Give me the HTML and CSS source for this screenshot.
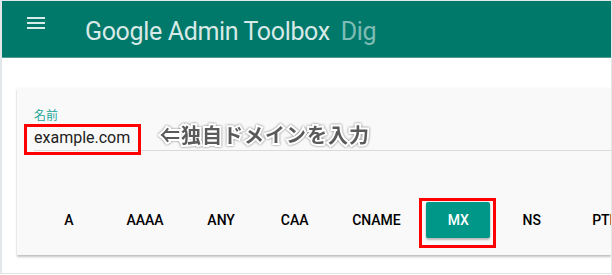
FILE: index.html
```html
<!DOCTYPE html>
<html lang="ja">
<head>
  <meta charset="UTF-8">
  <meta name="viewport" content="width=device-width, initial-scale=1.0">
  <title>Google Admin Toolbox Dig</title>
  <link rel="stylesheet" href="styles.css">
</head>
<body>
  <div class="page">
    <header class="topbar">
      <svg class="menu" width="24" height="24" viewBox="0 0 24 24">
        <path d="M3 18h18v-2H3v2zm0-5h18v-2H3v2zm0-7v2h18V6H3z" fill="currentColor"/>
      </svg>
      <h1 class="title">Google Admin Toolbox <span class="sub">Dig</span></h1>
    </header>

    <div class="card">
      <div class="field">
        <label class="label">名前</label>
        <div class="input">
          <span class="value">example.com</span>
          <span class="note">⇐独自ドメインを入力</span>
        </div>
      </div>

      <div class="types">
        <button class="type">A</button>
        <button class="type">AAAA</button>
        <button class="type">ANY</button>
        <button class="type">CAA</button>
        <button class="type">CNAME</button>
        <button class="type active">MX</button>
        <button class="type">NS</button>
        <button class="type">PTR</button>
      </div>
    </div>
  </div>
</body>
</html>
```

FILE: styles.css
```css
body { margin: 0; font-family: Roboto, "Noto Sans", sans-serif; background: #fff; overflow: hidden; }
.page { width: 612px; height: 274px; box-sizing: border-box; border: 1px solid #e3e7ea; border-left-width: 2px; overflow: hidden; }

.topbar { display: flex; align-items: flex-start; height: 56px; background: #00796b; border-bottom: 1px solid #4f9d92; color: rgba(255,255,255,.85); }
.menu { margin: 10px 0 0 22px; flex: none; }
.title { margin: 16px 0 0 37px; font-size: 25px; font-weight: 400; line-height: 30px; white-space: nowrap; letter-spacing: -0.35px; }
.sub { margin-left: 5px; color: rgba(255,255,255,.5); }

.card { margin: 30px 0 0 15px; padding: 20px 0 17px 17px; background: #f9f9f9; box-shadow: 0 2px 2px rgba(0,0,0,.24), 0 0 1px rgba(0,0,0,.08); }
.label { display: block; font-family: "Noto Sans CJK JP", sans-serif; font-size: 12px; line-height: 14px; color: #26a69a; }
.input { position: relative; margin-top: 6px; padding-bottom: 2px; border-bottom: 1px solid #dadada; }
.value { position: relative; display: inline-block; font-size: 16px; line-height: 20px; color: #222; }
.value::after { content: ""; position: absolute; top: -4px; left: -10px; right: -11px; bottom: -7px; border: 3px solid #f00; }
.note { position: absolute; left: 126px; top: -5px; font-family: "Noto Sans CJK JP", sans-serif; font-weight: 700; font-size: 20px; line-height: 24px; letter-spacing: 1px; color: #5a5a5a; -webkit-text-stroke: 4px #fff; paint-order: stroke fill; filter: drop-shadow(0 0 0.8px #777); white-space: nowrap; }

.types { display: flex; gap: 9.5px; margin: 51px 0 0 3px; }
.type { position: relative; flex: none; min-width: 64px; height: 36px; padding: 0 16px; border: none; border-radius: 2px; background: transparent; font-family: Roboto, sans-serif; font-weight: 500; font-size: 14px; color: #000; }
.type.active { background: #009688; color: #fff; box-shadow: 0 2px 2px rgba(0,0,0,.24), 0 0 2px rgba(0,0,0,.12); }
.type.active::after { content: ""; position: absolute; top: -4px; left: -7px; right: -6px; bottom: -10px; border: 3px solid #f00; }
```
